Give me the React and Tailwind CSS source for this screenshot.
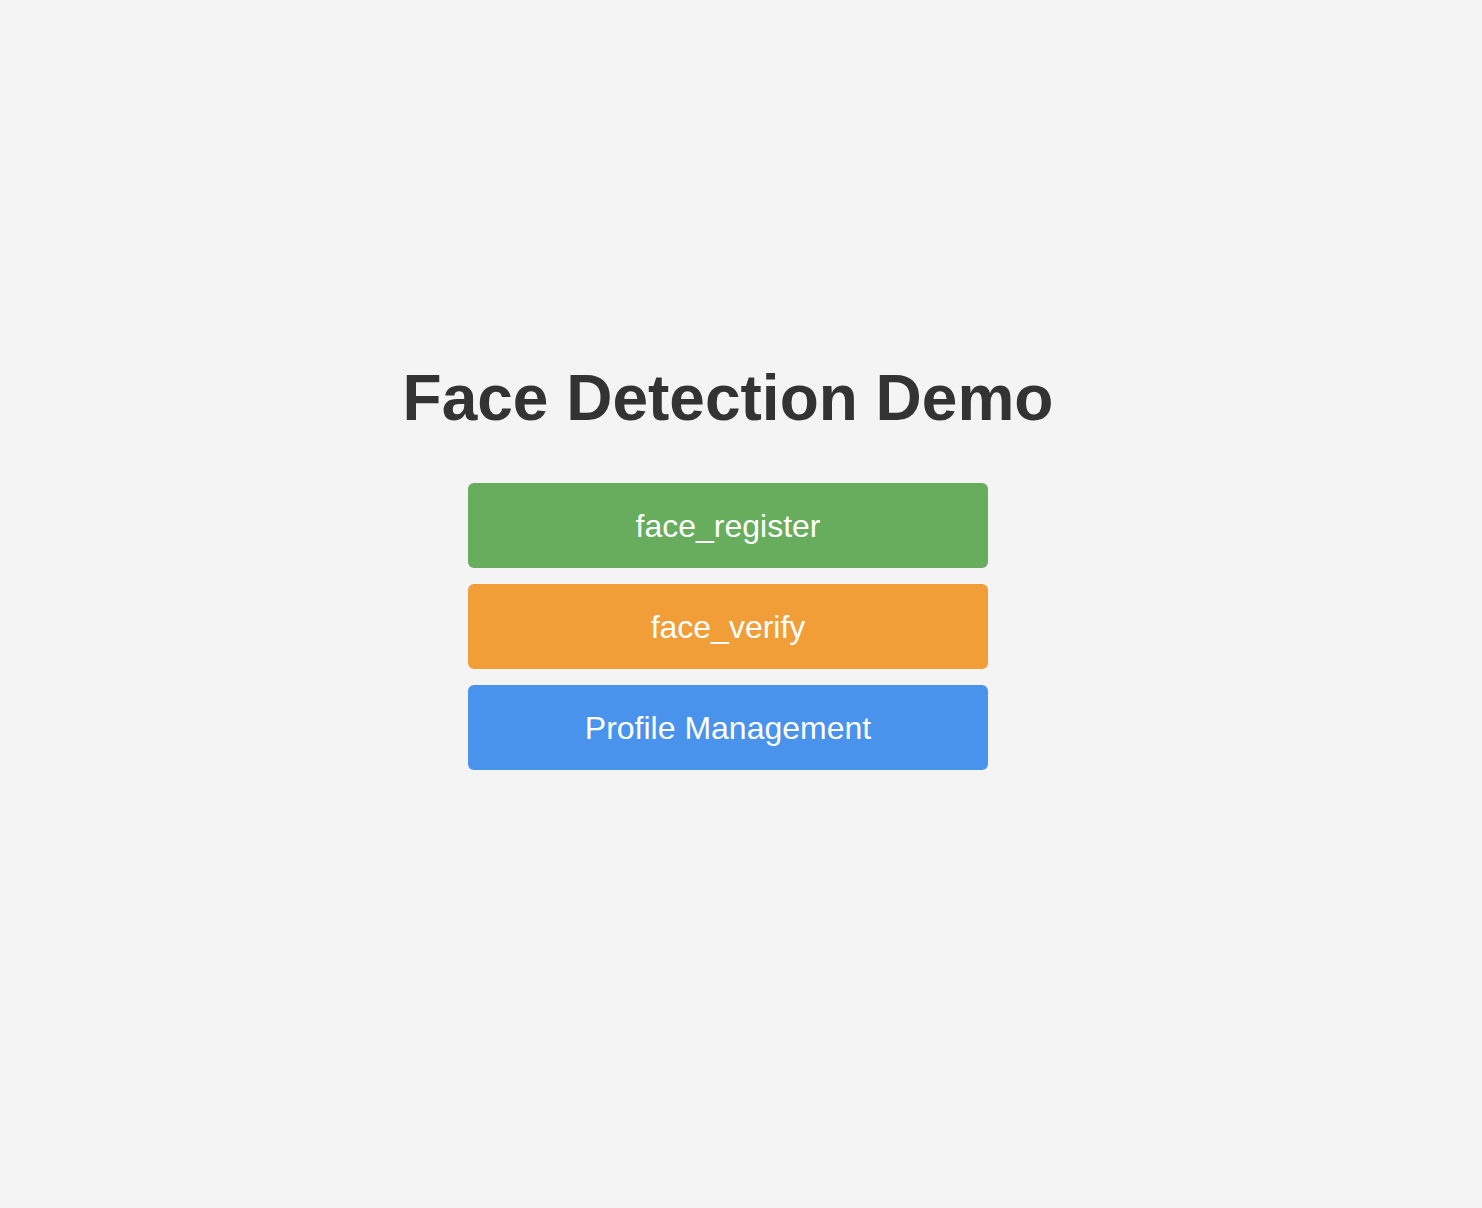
const buttons = [
  { label: "face_register", className: "bg-[#68ad5e]" },
  { label: "face_verify", className: "bg-[#f19e38]" },
  { label: "Profile Management", className: "bg-[#4a93ec]" },
];

const App = () => {
  return (
    <div className="flex min-h-screen flex-col items-center justify-center bg-[#f4f4f4] pr-[26px] pb-[77px] font-['Liberation_Sans',Arial,sans-serif]">
      <h1 className="text-[64px] font-bold leading-[74px] text-[#333333]">Face Detection Demo</h1>
      <div className="mt-[48px] flex w-[520px] flex-col gap-4">
        {buttons.map((button) => (
          <button key={button.label} className={`h-[85px] w-full rounded-md text-[32px] text-white ${button.className}`}>
            {button.label}
          </button>
        ))}
      </div>
    </div>
  );
};

export default App;
